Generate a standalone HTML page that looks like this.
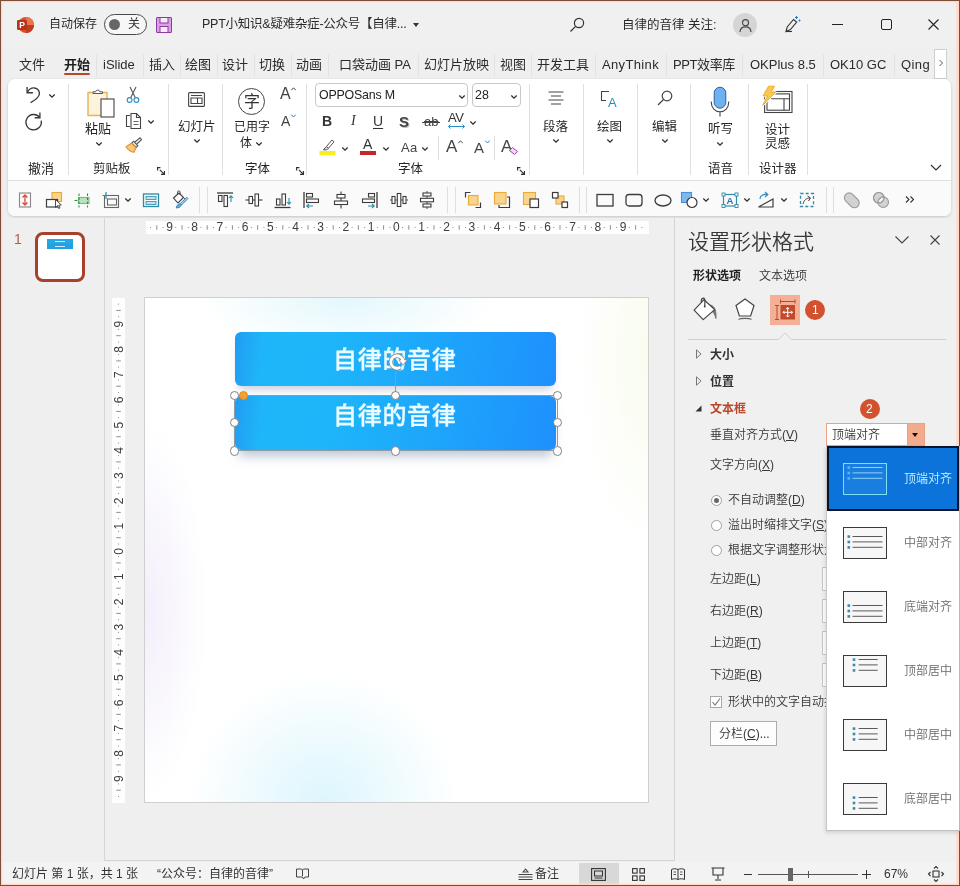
<!DOCTYPE html>
<html lang="zh-CN">
<head>
<meta charset="utf-8">
<title>PowerPoint</title>
<style>
*{box-sizing:border-box;margin:0;padding:0}
html,body{width:960px;height:886px;overflow:hidden;background:#f0f0f0}
body{font-family:"Liberation Sans","Noto Sans CJK SC",sans-serif;color:#262626;font-size:13px}
#app{position:relative;width:960px;height:886px;overflow:hidden;background:#efefef}
.a{position:absolute}
.t{position:absolute;white-space:nowrap;line-height:1;will-change:transform}
svg{position:absolute;overflow:visible;will-change:transform}
.vsep{position:absolute;width:1px;background:#d8d8d8}
.hsep{position:absolute;height:1px;background:#d8d8d8}
.lbl{font-size:13px;color:#262626}
.tab{font-size:13px;color:#2b2b2b}
.pn{font-size:12.5px;color:#383838;font-weight:350}
.dd{font-size:12px;color:#666;font-weight:350}
</style>
</head>
<body>
<div id="app">

<!-- ===== TITLE BAR ===== -->
<div id="titlebar" class="a" style="left:0;top:0;width:960px;height:48px;background:#f0f0f0">
  <!-- ppt logo -->
  <svg style="left:16px;top:16px" width="18" height="18" viewBox="0 0 18 18">
    <circle cx="10" cy="9" r="8" fill="#d9512c"/>
    <path d="M10 1a8 8 0 0 1 8 8h-8z" fill="#e8764f"/>
    <path d="M10 17a8 8 0 0 0 8-8h-8z" fill="#c43c1b"/>
    <rect x="1" y="4" width="10" height="10" rx="1.2" fill="#b5351a"/>
    <text x="6" y="12.2" font-size="8.5" font-weight="700" fill="#fff" text-anchor="middle" font-family="Liberation Sans, sans-serif">P</text>
  </svg>
  <div class="t" style="left:49px;top:18px;font-size:12px;color:#2a2a2a">自动保存</div>
  <div class="a" style="left:104px;top:14px;width:43px;height:21px;border:1px solid #4a4a4a;border-radius:11px;background:#f7f7f7"></div>
  <div class="a" style="left:109px;top:19px;width:11px;height:11px;border-radius:50%;background:#666"></div>
  <div class="t" style="left:128px;top:18px;font-size:12px;color:#333">关</div>
  <!-- save icon -->
  <svg style="left:156px;top:17px" width="16" height="16" viewBox="0 0 16 16">
    <path d="M1 0.5h14a.5.5 0 0 1 .5.5v14a.5.5 0 0 1-.5.5H1a.5.5 0 0 1-.5-.5V1a.5.5 0 0 1 .5-.5z" fill="#d9a0e6" stroke="#8e3aa3" stroke-width="1"/>
    <rect x="4" y="0.5" width="8" height="5.5" fill="#f7ebfa" stroke="#8e3aa3" stroke-width="1"/>
    <rect x="4" y="9.5" width="8" height="6" fill="#f7ebfa" stroke="#8e3aa3" stroke-width="1"/>
  </svg>
  <div class="t" style="left:202px;top:18px;font-size:12.5px;color:#2a2a2a;letter-spacing:-.25px">PPT小知识&amp;疑难杂症-公众号【自律...</div>
  <div class="a" style="left:413px;top:23px;width:0;height:0;border-left:3.5px solid transparent;border-right:3.5px solid transparent;border-top:4px solid #333"></div>
  <!-- search -->
  <svg style="left:569px;top:17px" width="16" height="16" viewBox="0 0 16 16" fill="none" stroke="#333" stroke-width="1.2"><circle cx="10" cy="6" r="4.6"/><path d="M6.6 9.4L1.5 14.5"/></svg>
  <div class="t" style="left:622px;top:18.5px;font-size:12.5px;color:#2a2a2a">自律的音律 关注:</div>
  <!-- avatar -->
  <div class="a" style="left:733px;top:13px;width:24px;height:24px;border-radius:50%;background:#d5d5d5"></div>
  <svg style="left:737.5px;top:17.5px" width="15" height="15" viewBox="0 0 16 16" fill="none" stroke="#444" stroke-width="1.2"><circle cx="8" cy="5" r="3.2"/><path d="M2.2 15c0-3.8 2.5-5.6 5.8-5.6s5.8 1.8 5.8 5.6"/></svg>
  <!-- pen sparkle -->
  <svg style="left:783px;top:14px" width="20" height="20" viewBox="0 0 20 20" fill="none" stroke="#333" stroke-width="1.1"><path d="M3 17.5l1.2-4.5 6.3-7.5 3.2 2.6-6.3 7.5z"/><path d="M3 17.5h6"/><path d="M13.5 2v3M12 3.5h3M16.5 5.5v2M15.5 6.5h2" stroke="#2b7bd6"/></svg>
  <!-- window controls -->
  <div class="a" style="left:832px;top:24px;width:11px;height:1px;background:#222"></div>
  <div class="a" style="left:881px;top:19px;width:11px;height:11px;border:1.2px solid #222;border-radius:2px"></div>
  <svg style="left:928px;top:19px" width="11" height="11" viewBox="0 0 11 11" stroke="#222" stroke-width="1.1"><path d="M0.5 0.5l10 10M10.5 0.5l-10 10"/></svg>
</div>

<!-- ===== TABS ===== -->
<div id="tabs" class="a" style="left:0;top:48px;width:960px;height:32px">
  <div class="t tab" style="left:19px;top:10px;">文件</div>
  <div class="t tab" style="left:64px;top:10px;font-weight:700;color:#1e1e1e;">开始</div>
  <div class="t tab" style="left:103px;top:10px;">iSlide</div>
  <div class="t tab" style="left:149px;top:10px;">插入</div>
  <div class="t tab" style="left:185px;top:10px;">绘图</div>
  <div class="t tab" style="left:222px;top:10px;">设计</div>
  <div class="t tab" style="left:259px;top:10px;">切换</div>
  <div class="t tab" style="left:296px;top:10px;">动画</div>
  <div class="t tab" style="left:339px;top:10px;">口袋动画 PA</div>
  <div class="t tab" style="left:424px;top:10px;">幻灯片放映</div>
  <div class="t tab" style="left:500px;top:10px;">视图</div>
  <div class="t tab" style="left:537px;top:10px;">开发工具</div>
  <div class="t tab" style="left:602px;top:10px;letter-spacing:.35px">AnyThink</div>
  <div class="t tab" style="left:673px;top:10px;letter-spacing:-.4px">PPT效率库</div>
  <div class="t tab" style="left:750px;top:10px;">OKPlus 8.5</div>
  <div class="t tab" style="left:830px;top:10px;">OK10 GC</div>
  <div class="t tab" style="left:901px;top:10px;letter-spacing:.4px">Qing</div>
  <div class="vsep" style="left:96px;top:6px;height:22px;background:#e2e2e2"></div>
  <div class="vsep" style="left:143px;top:6px;height:22px;background:#e2e2e2"></div>
  <div class="vsep" style="left:180px;top:6px;height:22px;background:#e2e2e2"></div>
  <div class="vsep" style="left:217px;top:6px;height:22px;background:#e2e2e2"></div>
  <div class="vsep" style="left:254px;top:6px;height:22px;background:#e2e2e2"></div>
  <div class="vsep" style="left:291px;top:6px;height:22px;background:#e2e2e2"></div>
  <div class="vsep" style="left:328px;top:6px;height:22px;background:#e2e2e2"></div>
  <div class="vsep" style="left:418px;top:6px;height:22px;background:#e2e2e2"></div>
  <div class="vsep" style="left:494px;top:6px;height:22px;background:#e2e2e2"></div>
  <div class="vsep" style="left:531px;top:6px;height:22px;background:#e2e2e2"></div>
  <div class="vsep" style="left:595px;top:6px;height:22px;background:#e2e2e2"></div>
  <div class="vsep" style="left:666px;top:6px;height:22px;background:#e2e2e2"></div>
  <div class="vsep" style="left:742px;top:6px;height:22px;background:#e2e2e2"></div>
  <div class="vsep" style="left:823px;top:6px;height:22px;background:#e2e2e2"></div>
  <div class="vsep" style="left:894px;top:6px;height:22px;background:#e2e2e2"></div>
  <div class="a" style="left:64px;top:25px;width:26px;height:2px;background:#b7472a;border-radius:1px"></div>
  <div class="a" style="left:934px;top:1px;width:13px;height:30px;background:#fff;border:1px solid #cfcfcf"></div>
  <svg style="left:938px;top:11px" width="6" height="8" viewBox="0 0 6 8" fill="none" stroke="#555" stroke-width="1"><path d="M1.5 1l3 3-3 3"/></svg>
</div>

<!-- ===== RIBBON ===== -->
<div id="ribbon" class="a" style="left:8px;top:79px;width:943px;height:137px;background:#fff;border-radius:7px;box-shadow:0 1px 3px rgba(0,0,0,.18)"></div>
<!-- ribbon group 1-4 -->
<svg style="left:23px;top:84px" width="21" height="21" viewBox="0 0 18 18" fill="none" stroke="#3a3a3a" stroke-width="1.15"><path d="M3.5 2.5v5h5"/><path d="M3.8 7.2C5 4.6 7.3 3.2 9.8 3.4c3 .3 4.6 2.8 4.2 5.4-.4 2.6-2.8 4.6-7.5 7.2"/></svg>
<svg style="left:49px;top:93.5px" width="6" height="4" viewBox="0 0 6 4" fill="none" stroke="#2e2e2e" stroke-width="1.25"><path d="M0.3 0.5l2.7 2.7 2.7-2.7"/></svg>
<svg style="left:23px;top:109px" width="21" height="21" viewBox="0 0 18 18" fill="none" stroke="#3a3a3a" stroke-width="1.15"><path d="M14.5 3v4.5H10"/><path d="M14.3 7.2A6.6 6.6 0 1 0 15.6 10"/></svg>
<div class="t lbl" style="left:28px;top:161.5px;font-size:13px;">撤消</div>
<div class="vsep" style="left:68px;top:84px;height:91px;background:#e0e0e0"></div>
<svg style="left:86px;top:87px" width="30" height="32" viewBox="0 0 30 32" fill="none">
<path d="M2 5.5h19v23H2z" fill="#fdf2dc" stroke="#e8b352" stroke-width="1.4"/>
<path d="M7 6.5V4.8h2.6a2.2 2.2 0 0 1 4.3 0h2.6v1.7z" fill="#fff" stroke="#555" stroke-width="1"/>
<rect x="15" y="12" width="13" height="18" fill="#fff" stroke="#444" stroke-width="1.1"/>
</svg>
<div class="t lbl" style="left:85px;top:121.5px;font-size:13px;">粘贴</div>
<svg style="left:96px;top:141.5px" width="6" height="4" viewBox="0 0 6 4" fill="none" stroke="#2e2e2e" stroke-width="1.25"><path d="M0.3 0.5l2.7 2.7 2.7-2.7"/></svg>
<svg style="left:126px;top:86px" width="14" height="18" viewBox="0 0 14 18" fill="none" stroke-width="1.1">
<path d="M4 1l5.2 10.5M10 1L4.8 11.5" stroke="#555"/><circle cx="3.6" cy="14" r="2.4" stroke="#2b8cc4"/><circle cx="10.4" cy="14" r="2.4" stroke="#2b8cc4"/></svg>
<svg style="left:125px;top:112px" width="17" height="18" viewBox="0 0 17 18" fill="none" stroke="#444" stroke-width="1.1">
<path d="M5 3.5H1.5v11H5"/><path d="M6 1.5h5.5l4 4v11H6z" fill="#fff"/><path d="M11.5 1.5v4h4"/><path d="M8.5 9.5h5M8.5 12.5h5" stroke="#666"/></svg>
<svg style="left:148px;top:119.5px" width="6" height="4" viewBox="0 0 6 4" fill="none" stroke="#2e2e2e" stroke-width="1.25"><path d="M0.3 0.5l2.7 2.7 2.7-2.7"/></svg>
<svg style="left:125px;top:136px" width="18" height="18" viewBox="0 0 18 18" fill="none" stroke-width="1.1">
<path d="M10 6l5-4.2 1.5 1.8L11.7 8" stroke="#555" fill="#fff"/><path d="M8.6 5.2l4.2 4.6-1.6 1.6-4.4-4.4z" fill="#fff" stroke="#555"/><path d="M6.6 7L1 10.8c2 3.4 4.3 5 8 5.5L11 11.5z" fill="#f8c77a" stroke="#e0952a"/></svg>
<div class="t lbl" style="left:93px;top:162.8px;font-size:12.5px;">剪贴板</div>
<svg style="left:157.0px;top:167.0px" width="8" height="8" viewBox="0 0 7 7" fill="none" stroke="#333" stroke-width="1.05"><path d="M0.5 0.5h-0v0M0.5 3V0.5H3M2.5 2.5l4 4M6.5 3.5v3h-3"/></svg>
<div class="vsep" style="left:168px;top:84px;height:91px;background:#e0e0e0"></div>
<svg style="left:188px;top:92px" width="17" height="15" viewBox="0 0 17 15" fill="none" stroke="#444" stroke-width="1.1"><rect x="0.6" y="0.6" width="15.8" height="13.8" rx="1"/><path d="M3 3.5h11M3 6h11v5.5H3zM9.5 6v5.5"/></svg>
<div class="t lbl" style="left:178px;top:120.8px;font-size:12.5px;">幻灯片</div>
<svg style="left:194px;top:138.5px" width="6" height="4" viewBox="0 0 6 4" fill="none" stroke="#2e2e2e" stroke-width="1.25"><path d="M0.3 0.5l2.7 2.7 2.7-2.7"/></svg>
<div class="vsep" style="left:222px;top:84px;height:91px;background:#e0e0e0"></div>
<div class="a" style="left:238px;top:88px;width:27px;height:27px;border:1.2px solid #444;border-radius:50%"></div>
<div class="t" style="left:243.5px;top:93.5px;font-size:16px;color:#333">字</div>
<div class="t lbl" style="left:234px;top:121.0px;font-size:12px;">已用字</div>
<div class="t lbl" style="left:240px;top:137.0px;font-size:12px;">体</div>
<svg style="left:256px;top:141.5px" width="6" height="4" viewBox="0 0 6 4" fill="none" stroke="#2e2e2e" stroke-width="1.25"><path d="M0.3 0.5l2.7 2.7 2.7-2.7"/></svg>
<div class="t" style="left:280px;top:86px;font-size:16px;color:#444">A</div><svg style="left:291px;top:87px" width="5" height="4" viewBox="0 0 5 4" fill="none" stroke="#444" stroke-width="1"><path d="M0.3 3.2l2.2-2.4 2.2 2.4"/></svg>
<div class="t" style="left:281px;top:114px;font-size:14px;color:#444">A</div><svg style="left:291px;top:114px" width="5" height="4" viewBox="0 0 5 4" fill="none" stroke="#2b7bd6" stroke-width="1"><path d="M0.3 0.6l2.2 2.4 2.2-2.4"/></svg>
<div class="t lbl" style="left:245px;top:162.8px;font-size:12.5px;">字体</div>
<svg style="left:296.0px;top:167.0px" width="8" height="8" viewBox="0 0 7 7" fill="none" stroke="#333" stroke-width="1.05"><path d="M0.5 0.5h-0v0M0.5 3V0.5H3M2.5 2.5l4 4M6.5 3.5v3h-3"/></svg>
<div class="vsep" style="left:306px;top:84px;height:91px;background:#e0e0e0"></div>
<!-- ribbon font group -->
<div class="a" style="left:315px;top:83px;width:153px;height:24px;border:1px solid #c8c8c8;border-radius:4px;background:#fff"></div>
<div class="t" style="left:318.5px;top:89px;font-size:12.4px;color:#222;letter-spacing:-.2px">OPPOSans M</div>
<svg style="left:459px;top:94.5px" width="6" height="4" viewBox="0 0 6 4" fill="none" stroke="#2e2e2e" stroke-width="1.25"><path d="M0.3 0.5l2.7 2.7 2.7-2.7"/></svg>
<div class="a" style="left:472px;top:83px;width:49px;height:24px;border:1px solid #c8c8c8;border-radius:4px;background:#fff"></div>
<div class="t" style="left:474.5px;top:89px;font-size:12.4px;color:#222">28</div>
<svg style="left:511px;top:94.5px" width="6" height="4" viewBox="0 0 6 4" fill="none" stroke="#2e2e2e" stroke-width="1.25"><path d="M0.3 0.5l2.7 2.7 2.7-2.7"/></svg>
<div class="t" style="left:322px;top:114px;font-size:14px;font-weight:700;color:#333">B</div>
<div class="t" style="left:351px;top:114px;font-size:14px;font-style:italic;color:#333;font-family:'Liberation Serif',serif">I</div>
<div class="t" style="left:373px;top:114px;font-size:14px;color:#333;text-decoration:underline;text-underline-offset:2px">U</div>
<div class="t" style="left:399px;top:114px;font-size:15px;font-weight:700;color:#444;text-shadow:1px 1px 0 #bbb">S</div>
<div class="t" style="left:424px;top:115px;font-size:13px;color:#444;text-decoration:line-through">ab</div><div class="a" style="left:422px;top:122px;width:18px;height:1px;background:#444"></div>
<div class="t" style="left:448px;top:111px;font-size:13px;color:#333;letter-spacing:-.5px">AV</div>
<svg style="left:448px;top:124px" width="17" height="5" viewBox="0 0 17 5" fill="none" stroke="#2b8cc4" stroke-width="1"><path d="M0.5 2.5h16M2.5 0.5l-2 2 2 2M14.5 0.5l2 2-2 2"/></svg>
<svg style="left:470px;top:120.5px" width="6" height="4" viewBox="0 0 6 4" fill="none" stroke="#2e2e2e" stroke-width="1.25"><path d="M0.3 0.5l2.7 2.7 2.7-2.7"/></svg>
<svg style="left:319px;top:138px" width="17" height="18" viewBox="0 0 17 18" fill="none">
<path d="M7.5 8.5L13 2l2 1.8-5.6 6.5z" stroke="#555" stroke-width="1" fill="#fff"/><path d="M7.5 8.500l1.900 1.800-1.500 1.500H4.300z" stroke="#555" stroke-width="1" fill="#ddd"/>
<rect x="0.500" y="13" width="16" height="4.200" fill="#f7f01d"/></svg>
<svg style="left:342px;top:146.5px" width="6" height="4" viewBox="0 0 6 4" fill="none" stroke="#2e2e2e" stroke-width="1.25"><path d="M0.3 0.5l2.7 2.7 2.7-2.7"/></svg>
<div class="t" style="left:362.5px;top:137px;font-size:14px;color:#333">A</div><div class="a" style="left:360px;top:151px;width:16px;height:4px;background:#c8242b"></div>
<svg style="left:383px;top:146.5px" width="6" height="4" viewBox="0 0 6 4" fill="none" stroke="#2e2e2e" stroke-width="1.25"><path d="M0.3 0.5l2.7 2.7 2.7-2.7"/></svg>
<div class="t" style="left:401px;top:140.5px;font-size:13px;color:#444;letter-spacing:.3px">Aa</div>
<svg style="left:422px;top:146.5px" width="6" height="4" viewBox="0 0 6 4" fill="none" stroke="#2e2e2e" stroke-width="1.25"><path d="M0.3 0.5l2.7 2.7 2.7-2.7"/></svg>
<div class="vsep" style="left:438px;top:136px;height:24px;background:#e0e0e0"></div>
<div class="t" style="left:446px;top:138px;font-size:17px;color:#444">A</div><svg style="left:458px;top:140px" width="5" height="4" viewBox="0 0 5 4" fill="none" stroke="#444" stroke-width="1"><path d="M0.3 3.2l2.200-2.400 2.200 2.400"/></svg>
<div class="t" style="left:474px;top:140px;font-size:15px;color:#444">A</div><svg style="left:484.500px;top:140px" width="5" height="4" viewBox="0 0 5 4" fill="none" stroke="#2b7bd6" stroke-width="1"><path d="M0.3 0.6l2.200 2.400 2.200-2.400"/></svg>
<div class="vsep" style="left:494px;top:136px;height:24px;background:#e0e0e0"></div>
<div class="t" style="left:501px;top:138px;font-size:17px;color:#444">A</div><svg style="left:509px;top:147px" width="9" height="8" viewBox="0 0 9 8" fill="none"><path d="M3.5 0.500L8.500 4.500 5.500 7.500 0.500 3.500z" fill="#f4d6f7" stroke="#a13fb3" stroke-width="1"/></svg>
<div class="t lbl" style="left:398px;top:162.8px;font-size:12.5px;">字体</div>
<svg style="left:517.0px;top:167.0px" width="8" height="8" viewBox="0 0 7 7" fill="none" stroke="#333" stroke-width="1.05"><path d="M0.5 3V0.5H3M2.5 2.5l4 4M6.5 3.5v3h-3"/></svg>
<div class="vsep" style="left:529px;top:84px;height:91px;background:#e0e0e0"></div>
<svg style="left:548px;top:91px" width="16" height="14" viewBox="0 0 16 14" fill="none" stroke="#444" stroke-width="1.1"><path d="M0.5 1h15M3 5h10M0.5 9h15M3 13h10"/></svg>
<div class="t lbl" style="left:543px;top:120.8px;font-size:12.5px;">段落</div>
<svg style="left:553px;top:138.5px" width="6" height="4" viewBox="0 0 6 4" fill="none" stroke="#2e2e2e" stroke-width="1.25"><path d="M0.3 0.5l2.7 2.7 2.7-2.7"/></svg>
<div class="vsep" style="left:583px;top:84px;height:91px;background:#e0e0e0"></div>
<svg style="left:600px;top:90px" width="20" height="18" viewBox="0 0 20 18" fill="none"><path d="M9 1.500H1.500v9H6" stroke="#444" stroke-width="1.100"/><circle cx="9.500" cy="2" r="0" /><text x="8" y="17" font-size="13" fill="#2b8cc4" font-family="Liberation Sans, sans-serif">A</text></svg>
<div class="t lbl" style="left:597px;top:120.8px;font-size:12.5px;">绘图</div>
<svg style="left:607px;top:138.5px" width="6" height="4" viewBox="0 0 6 4" fill="none" stroke="#2e2e2e" stroke-width="1.25"><path d="M0.3 0.5l2.7 2.7 2.7-2.7"/></svg>
<div class="vsep" style="left:637px;top:84px;height:91px;background:#e0e0e0"></div>
<svg style="left:657px;top:90px" width="16" height="16" viewBox="0 0 16 16" fill="none" stroke="#444" stroke-width="1.200"><circle cx="10" cy="6" r="4.800"/><path d="M6.500 9.500L1 15"/></svg>
<div class="t lbl" style="left:652px;top:120.8px;font-size:12.5px;">编辑</div>
<svg style="left:662px;top:138.5px" width="6" height="4" viewBox="0 0 6 4" fill="none" stroke="#2e2e2e" stroke-width="1.25"><path d="M0.3 0.5l2.7 2.7 2.7-2.7"/></svg>
<div class="vsep" style="left:690px;top:84px;height:91px;background:#e0e0e0"></div>
<svg style="left:710px;top:86px" width="20" height="32" viewBox="0 0 20 32" fill="none"><rect x="4.200" y="1.200" width="11.600" height="21" rx="5.800" fill="#6db2ee" stroke="#2c63a6" stroke-width="1"/><path d="M1.200 15.500c0 6.500 4 10.300 8.800 10.300s8.800-3.800 8.800-10.300" stroke="#444" stroke-width="1.100"/><path d="M10 25.800V30.500" stroke="#444" stroke-width="1.100"/></svg>
<div class="t lbl" style="left:708px;top:122.8px;font-size:12.5px;">听写</div>
<svg style="left:717px;top:141.5px" width="6" height="4" viewBox="0 0 6 4" fill="none" stroke="#2e2e2e" stroke-width="1.25"><path d="M0.3 0.5l2.7 2.7 2.7-2.7"/></svg>
<div class="t lbl" style="left:708px;top:162.8px;font-size:12.5px;">语音</div>
<div class="vsep" style="left:748px;top:84px;height:91px;background:#e0e0e0"></div>
<svg style="left:760px;top:85px" width="33" height="29" viewBox="0 0 33 29" fill="none"><rect x="4.600" y="6.500" width="27.400" height="21" stroke="#444" stroke-width="1.100" fill="#fff"/><rect x="7" y="8.900" width="22.500" height="16.300" stroke="#444" stroke-width="1.100"/><path d="M11 13.800h18.500M24 13.800v11.400" stroke="#444" stroke-width="1.100"/><path d="M8.500 1.200h6l-3.300 6.300h4.300L2.500 20.500l5-9.500H3z" fill="#fac84e" stroke="#fff" stroke-width="2.400" stroke-linejoin="round"/><path d="M8.500 1.200h6l-3.300 6.300h4.300L2.500 20.500l5-9.500H3z" fill="#fac84e" stroke="#e9a325" stroke-width=".8" stroke-linejoin="round"/></svg>
<div class="t lbl" style="left:765px;top:123.6px;font-size:12.5px;">设计</div>
<div class="t lbl" style="left:765px;top:137.9px;font-size:12.5px;">灵感</div>
<div class="t lbl" style="left:759px;top:162.8px;font-size:12.5px;">设计器</div>
<div class="vsep" style="left:807px;top:84px;height:91px;background:#e0e0e0"></div>
<svg style="left:930px;top:164px" width="12" height="7" viewBox="0 0 12 7" fill="none" stroke="#333" stroke-width="1.200"><path d="M1 1l5 5 5-5"/></svg>
<div class="a" style="left:8px;top:181px;width:943px;height:35px;background:#fafafa;border-radius:0 0 7px 7px"></div>
<div class="hsep" style="left:8px;top:180px;width:943px;background:#dfdfdf"></div>

<!-- QAT row -->
<svg style="left:16.0px;top:190.5px" width="18" height="18" viewBox="0 0 18 18" fill="none" stroke-width="1.1"><rect x="3.500" y="2" width="11" height="14" stroke="#888"/><path d="M9 4v10M6.500 6.500L9 4l2.500 2.500M6.500 11.500L9 14l2.500-2.500" stroke="#e0483e" stroke-width="1.300"/></svg>
<svg style="left:45.0px;top:190.5px" width="18" height="18" viewBox="0 0 18 18" fill="none" stroke-width="1.1"><rect x="7" y="1.500" width="9.500" height="9" fill="#f9d48a" stroke="#e9a93b"/><rect x="1.500" y="8.500" width="11" height="7.500" fill="#fff" stroke="#3c3c3c" stroke-width="1.200"/><path d="M10.500 8.500l0 8 2-1.800 1.300 2.800 1.200-.6-1.300-2.700 2.600-.2z" fill="#fff" stroke="#3c3c3c" stroke-width=".900"/></svg>
<svg style="left:74.0px;top:190.5px" width="18" height="18" viewBox="0 0 18 18" fill="none" stroke-width="1.1"><rect x="4.500" y="6.500" width="10.500" height="6" fill="#b9e3c0" stroke="#6fbf7d"/><path d="M5 2.500v14M13.500 2.500v14" stroke="#3b8a4a" stroke-dasharray="2.500 1.500"/><path d="M0.500 9.500h3" stroke="#3b8a4a"/></svg>
<svg style="left:102.0px;top:190.5px" width="18" height="18" viewBox="0 0 18 18" fill="none" stroke-width="1.1"><rect x="2.500" y="4.500" width="14" height="12" stroke="#666"/><rect x="5.500" y="8" width="9" height="6" stroke="#666"/><path d="M4 1v7M0.500 4.500h7" stroke="#2f8aa8" stroke-width="1.200"/></svg>
<svg style="left:125px;top:197.5px" width="6" height="4" viewBox="0 0 6 4" fill="none" stroke="#2e2e2e" stroke-width="1.25"><path d="M0.3 0.5l2.7 2.7 2.7-2.7"/></svg>
<svg style="left:142.0px;top:190.5px" width="18" height="18" viewBox="0 0 18 18" fill="none" stroke-width="1.1"><rect x="1.500" y="3" width="15" height="12.500" stroke="#2f8aa8" stroke-width="1.300"/><rect x="4" y="5.500" width="10" height="3" fill="#bfe3ec" stroke="#2f8aa8" stroke-width=".800"/><rect x="4" y="10.500" width="10" height="3" fill="#bfe3ec" stroke="#2f8aa8" stroke-width=".800"/></svg>
<svg style="left:171.0px;top:190.5px" width="18" height="18" viewBox="0 0 18 18" fill="none" stroke-width="1.1"><path d="M2.500 7l5.500-5 4.500 4.500-5.500 5.500z" fill="#fff" stroke="#3c3c3c"/><path d="M6.500 3.500V1.200a1.300 1.300 0 0 1 2.600 0V4" stroke="#3c3c3c" stroke-width=".9"/><path d="M12.500 6.500c1.300.8 1.800 2 1.500 4" stroke="#3c3c3c" stroke-width=".9"/><path d="M17 7.500l-6.500 6.500-1.300-1.300 6.500-6.500z" fill="#9fd0ea" stroke="#2f82b8" stroke-width=".9"/><path d="M10.500 14l-1.300-1.300-3 1.500-1 2.800 3.300-.6z" fill="#5fb0dd" stroke="#2f82b8" stroke-width=".9"/></svg>
<div class="vsep" style="left:199px;top:187px;height:26px;background:#dedede"></div>
<div class="vsep" style="left:207px;top:187px;height:26px;background:#dedede"></div>
<svg style="left:216.0px;top:190.5px" width="18" height="18" viewBox="0 0 18 18" fill="none" stroke-width="1.1"><path d="M1 2h16" stroke="#3c3c3c" stroke-width="1.300"/><rect x="2.500" y="4.500" width="3.500" height="6" stroke="#3c3c3c"/><rect x="8" y="4.500" width="3.500" height="11" stroke="#3c3c3c"/><path d="M15 11V5M13 7l2-2.200 2 2.200" stroke="#2f8aa8"/></svg>
<svg style="left:245.0px;top:190.5px" width="18" height="18" viewBox="0 0 18 18" fill="none" stroke-width="1.1"><path d="M0.500 9h17" stroke="#3c3c3c"/><rect x="4" y="5.500" width="3.500" height="7" fill="#fff" stroke="#3c3c3c"/><rect x="10" y="3" width="3.500" height="12" fill="#fff" stroke="#3c3c3c"/></svg>
<svg style="left:274.0px;top:190.5px" width="18" height="18" viewBox="0 0 18 18" fill="none" stroke-width="1.1"><path d="M0.500 16.500h16" stroke="#3c3c3c" stroke-width="1.300"/><rect x="2.500" y="8" width="3.500" height="6" stroke="#3c3c3c"/><rect x="8" y="3" width="3.500" height="11" stroke="#3c3c3c"/><path d="M15 7v6M13 11l2 2.200 2-2.200" stroke="#2f8aa8"/></svg>
<svg style="left:302.0px;top:190.5px" width="18" height="18" viewBox="0 0 18 18" fill="none" stroke-width="1.1"><path d="M2 1v16" stroke="#3c3c3c" stroke-width="1.300"/><rect x="4.500" y="2.500" width="6" height="3.500" stroke="#3c3c3c"/><rect x="4.500" y="8" width="12" height="3.500" stroke="#3c3c3c"/><path d="M11 15H5M7 13l-2.200 2 2.200 2" stroke="#2f8aa8"/></svg>
<svg style="left:331.5px;top:190.5px" width="18" height="18" viewBox="0 0 18 18" fill="none" stroke-width="1.1"><path d="M9 0.500v17" stroke="#3c3c3c"/><rect x="5" y="3.500" width="8" height="3.500" fill="#fff" stroke="#3c3c3c"/><rect x="2.500" y="10" width="13" height="3.500" fill="#fff" stroke="#3c3c3c"/></svg>
<svg style="left:361.0px;top:190.5px" width="18" height="18" viewBox="0 0 18 18" fill="none" stroke-width="1.1"><path d="M16 1v16" stroke="#3c3c3c" stroke-width="1.300"/><rect x="7.500" y="2.500" width="6" height="3.500" stroke="#3c3c3c"/><rect x="1.500" y="8" width="12" height="3.500" stroke="#3c3c3c"/><path d="M7 15h6M11 13l2.200 2-2.200 2" stroke="#2f8aa8"/></svg>
<svg style="left:390.0px;top:190.5px" width="18" height="18" viewBox="0 0 18 18" fill="none" stroke-width="1.1"><path d="M0 9h18" stroke="#3c3c3c" stroke-width=".9"/><rect x="2" y="5.500" width="3" height="7" fill="#fff" stroke="#3c3c3c"/><rect x="7.300" y="2.500" width="3.500" height="13" fill="#fff" stroke="#3c3c3c"/><rect x="13" y="5.500" width="3" height="7" fill="#fff" stroke="#3c3c3c"/></svg>
<svg style="left:418.0px;top:190.5px" width="18" height="18" viewBox="0 0 18 18" fill="none" stroke-width="1.1"><path d="M9 0v18" stroke="#3c3c3c" stroke-width=".9"/><rect x="5" y="2" width="8" height="3" fill="#fff" stroke="#3c3c3c"/><rect x="2.500" y="7.300" width="13" height="3.500" fill="#fff" stroke="#3c3c3c"/><rect x="5" y="13" width="8" height="3" fill="#fff" stroke="#3c3c3c"/></svg>
<div class="vsep" style="left:447px;top:187px;height:26px;background:#dedede"></div>
<div class="vsep" style="left:455px;top:187px;height:26px;background:#dedede"></div>
<svg style="left:463.5px;top:190.5px" width="18" height="18" viewBox="0 0 18 18" fill="none" stroke-width="1.1"><rect x="4.500" y="4.500" width="9.500" height="9.500" fill="#f9d48a" stroke="#e9a93b"/><path d="M6.500 1.500H1.500V6.500M11.500 16.500h5V11.500" stroke="#3c3c3c" stroke-width="1.200"/></svg>
<svg style="left:493.0px;top:190.5px" width="18" height="18" viewBox="0 0 18 18" fill="none" stroke-width="1.1"><path d="M14 6h2.500v10.500H6V14" stroke="#3c3c3c" stroke-width="1.200"/><rect x="1.500" y="1.500" width="11.500" height="11.500" fill="#f9d48a" stroke="#e9a93b"/></svg>
<svg style="left:522.0px;top:190.5px" width="18" height="18" viewBox="0 0 18 18" fill="none" stroke-width="1.1"><rect x="1.500" y="1.500" width="12" height="12" fill="#f9d48a" stroke="#e9a93b"/><rect x="8" y="8" width="8.500" height="8.500" fill="#fff" stroke="#3c3c3c" stroke-width="1.200"/></svg>
<svg style="left:551.0px;top:190.5px" width="18" height="18" viewBox="0 0 18 18" fill="none" stroke-width="1.1"><rect x="5" y="5" width="8" height="8" fill="#f9d48a" stroke="#e9a93b"/><rect x="1.500" y="1.500" width="5.500" height="5.500" fill="#fff" stroke="#3c3c3c" stroke-width="1.200"/><rect x="11" y="11" width="5.500" height="5.500" fill="#fff" stroke="#3c3c3c" stroke-width="1.200"/></svg>
<div class="vsep" style="left:579px;top:187px;height:26px;background:#dedede"></div>
<div class="vsep" style="left:586px;top:187px;height:26px;background:#dedede"></div>
<svg style="left:596.0px;top:190.5px" width="18" height="18" viewBox="0 0 18 18" fill="none" stroke-width="1.1"><rect x="1" y="3.500" width="16" height="11.500" stroke="#3c3c3c" stroke-width="1.300"/></svg>
<svg style="left:625.0px;top:190.5px" width="18" height="18" viewBox="0 0 18 18" fill="none" stroke-width="1.1"><rect x="1" y="3.500" width="16" height="11.500" rx="3" stroke="#3c3c3c" stroke-width="1.300"/></svg>
<svg style="left:654.0px;top:190.5px" width="18" height="18" viewBox="0 0 18 18" fill="none" stroke-width="1.1"><ellipse cx="9" cy="9.500" rx="8" ry="5.500" stroke="#3c3c3c" stroke-width="1.300"/></svg>
<svg style="left:680.0px;top:190.5px" width="18" height="18" viewBox="0 0 18 18" fill="none" stroke-width="1.1"><rect x="1.500" y="1.500" width="10" height="10" fill="#7fb8ea" stroke="#4a90d9"/><circle cx="12" cy="11.500" r="5" fill="#fff" stroke="#3c3c3c" stroke-width="1.200"/></svg>
<svg style="left:703px;top:197.5px" width="6" height="4" viewBox="0 0 6 4" fill="none" stroke="#2e2e2e" stroke-width="1.25"><path d="M0.3 0.5l2.7 2.7 2.7-2.7"/></svg>
<svg style="left:721.0px;top:190.5px" width="18" height="18" viewBox="0 0 18 18" fill="none" stroke-width="1.1"><rect x="2.500" y="3.500" width="13" height="11.500" stroke="#2f8aa8" stroke-width="1.200"/><g fill="#fff" stroke="#2f8aa8" stroke-width=".900"><rect x="1" y="2" width="3" height="3"/><rect x="14" y="2" width="3" height="3"/><rect x="1" y="13.500" width="3" height="3"/><rect x="14" y="13.500" width="3" height="3"/></g><text x="9" y="13" font-size="9.500" font-weight="700" fill="#2b6fb5" stroke="none" text-anchor="middle" font-family="Liberation Sans, sans-serif">A</text></svg>
<svg style="left:744px;top:197.5px" width="6" height="4" viewBox="0 0 6 4" fill="none" stroke="#2e2e2e" stroke-width="1.25"><path d="M0.3 0.5l2.7 2.7 2.7-2.7"/></svg>
<svg style="left:757.0px;top:190.5px" width="18" height="18" viewBox="0 0 18 18" fill="none" stroke-width="1.1"><path d="M1.500 16L16 16 16 8z" stroke="#3c3c3c" stroke-width="1.200"/><path d="M3 8C3 4.500 6 3 10.500 3.500M8 1l2.800 2.500L8 6" stroke="#2f8ac4" stroke-width="1.200"/></svg>
<svg style="left:781px;top:197.5px" width="6" height="4" viewBox="0 0 6 4" fill="none" stroke="#2e2e2e" stroke-width="1.25"><path d="M0.3 0.5l2.7 2.7 2.7-2.7"/></svg>
<svg style="left:798.0px;top:190.5px" width="18" height="18" viewBox="0 0 18 18" fill="none" stroke-width="1.1"><path d="M2.500 2.500h13v13h-13z" stroke="#2f8aa8" stroke-dasharray="3 2.200" stroke-width="1.300"/><path d="M5 13c1-4 3.500-6 7-6M9.500 5l3 2-2 3" stroke="#3c3c3c" stroke-width="1"/></svg>
<div class="vsep" style="left:826px;top:187px;height:26px;background:#dedede"></div>
<div class="vsep" style="left:833px;top:187px;height:26px;background:#dedede"></div>
<svg style="left:843.0px;top:190.5px" width="18" height="18" viewBox="0 0 18 18" fill="none" stroke-width="1.1"><path d="M2.800 3.300a4.800 4.800 0 0 1 6.800 0l5.200 5.200a4.800 4.800 0 0 1-6.800 6.800L2.800 10.100a4.800 4.800 0 0 1 0-6.800z" fill="#d2d2d2" stroke="#9a9a9a"/></svg>
<svg style="left:872.0px;top:190.5px" width="18" height="18" viewBox="0 0 18 18" fill="none" stroke-width="1.1"><circle cx="6.800" cy="6.800" r="5.300" fill="#d4d4d4" stroke="#9a9a9a"/><circle cx="11.200" cy="11.200" r="5.300" fill="#d4d4d4" stroke="#9a9a9a"/><circle cx="6.800" cy="6.800" r="5.300" fill="none" stroke="#9a9a9a"/><ellipse cx="9" cy="9" rx="3.200" ry="1.700" transform="rotate(-45 9 9)" fill="#f4f4f4" stroke="#9a9a9a" stroke-width=".8"/></svg>
<svg style="left:905px;top:196px" width="10" height="7" viewBox="0 0 10 7" fill="none" stroke="#333" stroke-width="1.100"><path d="M1 0.500l3 3-3 3M5.500 0.500l3 3-3 3"/></svg>

<!-- ===== LEFT THUMB PANEL ===== -->
<div id="thumbs" class="a" style="left:0;top:218px;width:104px;height:644px;background:#efefef"></div>
<div class="vsep" style="left:104px;top:218px;height:643px;background:#d6d6d6"></div>

<!-- ===== WORKSPACE ===== -->
<div id="work" class="a" style="left:105px;top:218px;width:570px;height:643px;background:#efefef"></div>
<div class="hsep" style="left:105px;top:860px;width:570px;background:#d4d4d4"></div>

<!-- thumb -->
<div class="t" style="left:14px;top:232px;font-size:14px;color:#b25a45">1</div>
<div class="a" style="left:35px;top:232px;width:50px;height:50px;border:3px solid #a6422c;border-radius:8px;background:#fff"></div>
<div class="a" style="left:46.5px;top:239px;width:26.500px;height:4.700px;background:#25a7e6"></div><div class="a" style="left:46.500px;top:244px;width:26.500px;height:4.700px;background:#239fe2"></div>
<div class="a" style="left:55px;top:240.700px;width:10px;height:1.300px;background:#cfeefb"></div><div class="a" style="left:55px;top:245.700px;width:10px;height:1.300px;background:#cfeefb"></div>
<svg style="left:146px;top:221px" width="503" height="13" viewBox="0 0 503 13">
<rect width="503" height="13" fill="#fefefe"/>
<text x="23.5" y="10.3" font-size="12" fill="#3e3e3e" text-anchor="middle" font-family="Liberation Sans, sans-serif">9</text><text x="48.7" y="10.3" font-size="12" fill="#3e3e3e" text-anchor="middle" font-family="Liberation Sans, sans-serif">8</text><text x="73.9" y="10.3" font-size="12" fill="#3e3e3e" text-anchor="middle" font-family="Liberation Sans, sans-serif">7</text><text x="99.1" y="10.3" font-size="12" fill="#3e3e3e" text-anchor="middle" font-family="Liberation Sans, sans-serif">6</text><text x="124.3" y="10.3" font-size="12" fill="#3e3e3e" text-anchor="middle" font-family="Liberation Sans, sans-serif">5</text><text x="149.5" y="10.3" font-size="12" fill="#3e3e3e" text-anchor="middle" font-family="Liberation Sans, sans-serif">4</text><text x="174.7" y="10.3" font-size="12" fill="#3e3e3e" text-anchor="middle" font-family="Liberation Sans, sans-serif">3</text><text x="199.9" y="10.3" font-size="12" fill="#3e3e3e" text-anchor="middle" font-family="Liberation Sans, sans-serif">2</text><text x="225.1" y="10.3" font-size="12" fill="#3e3e3e" text-anchor="middle" font-family="Liberation Sans, sans-serif">1</text><text x="250.3" y="10.3" font-size="12" fill="#3e3e3e" text-anchor="middle" font-family="Liberation Sans, sans-serif">0</text><text x="275.5" y="10.3" font-size="12" fill="#3e3e3e" text-anchor="middle" font-family="Liberation Sans, sans-serif">1</text><text x="300.7" y="10.3" font-size="12" fill="#3e3e3e" text-anchor="middle" font-family="Liberation Sans, sans-serif">2</text><text x="325.9" y="10.3" font-size="12" fill="#3e3e3e" text-anchor="middle" font-family="Liberation Sans, sans-serif">3</text><text x="351.1" y="10.3" font-size="12" fill="#3e3e3e" text-anchor="middle" font-family="Liberation Sans, sans-serif">4</text><text x="376.3" y="10.3" font-size="12" fill="#3e3e3e" text-anchor="middle" font-family="Liberation Sans, sans-serif">5</text><text x="401.5" y="10.3" font-size="12" fill="#3e3e3e" text-anchor="middle" font-family="Liberation Sans, sans-serif">6</text><text x="426.7" y="10.3" font-size="12" fill="#3e3e3e" text-anchor="middle" font-family="Liberation Sans, sans-serif">7</text><text x="451.9" y="10.3" font-size="12" fill="#3e3e3e" text-anchor="middle" font-family="Liberation Sans, sans-serif">8</text><text x="477.1" y="10.3" font-size="12" fill="#3e3e3e" text-anchor="middle" font-family="Liberation Sans, sans-serif">9</text>
<path d="M29.7 6.00v1M36.0 4.25v4.5M42.3 6.00v1M4.5 6.00v1M10.8 4.25v4.5M17.1 6.00v1M54.9 6.00v1M61.2 4.25v4.5M67.5 6.00v1M80.1 6.00v1M86.4 4.25v4.5M92.7 6.00v1M105.3 6.00v1M111.6 4.25v4.5M117.9 6.00v1M130.5 6.00v1M136.8 4.25v4.5M143.1 6.00v1M155.7 6.00v1M162.0 4.25v4.5M168.3 6.00v1M180.9 6.00v1M187.2 4.25v4.5M193.5 6.00v1M206.1 6.00v1M212.4 4.25v4.5M218.7 6.00v1M231.3 6.00v1M237.6 4.25v4.5M243.9 6.00v1M256.5 6.00v1M262.8 4.25v4.5M269.1 6.00v1M281.7 6.00v1M288.0 4.25v4.5M294.3 6.00v1M306.9 6.00v1M313.2 4.25v4.5M319.5 6.00v1M332.1 6.00v1M338.4 4.25v4.5M344.7 6.00v1M357.3 6.00v1M363.6 4.25v4.5M369.9 6.00v1M382.5 6.00v1M388.8 4.25v4.5M395.1 6.00v1M407.7 6.00v1M414.0 4.25v4.5M420.3 6.00v1M432.9 6.00v1M439.2 4.25v4.5M445.5 6.00v1M458.1 6.00v1M464.4 4.25v4.5M470.7 6.00v1M483.3 6.00v1M489.6 4.25v4.5M495.9 6.00v1" stroke="#8f8f8f" stroke-width="1" fill="none"/>
</svg>
<svg style="left:112px;top:298px" width="13" height="505" viewBox="0 0 13 505">
<rect width="13" height="505" fill="#fefefe"/>
<text transform="translate(10.8 26.1) rotate(-90)" font-size="12" fill="#3e3e3e" text-anchor="middle" font-family="Liberation Sans, sans-serif">9</text><text transform="translate(10.8 51.3) rotate(-90)" font-size="12" fill="#3e3e3e" text-anchor="middle" font-family="Liberation Sans, sans-serif">8</text><text transform="translate(10.8 76.6) rotate(-90)" font-size="12" fill="#3e3e3e" text-anchor="middle" font-family="Liberation Sans, sans-serif">7</text><text transform="translate(10.8 101.8) rotate(-90)" font-size="12" fill="#3e3e3e" text-anchor="middle" font-family="Liberation Sans, sans-serif">6</text><text transform="translate(10.8 127.1) rotate(-90)" font-size="12" fill="#3e3e3e" text-anchor="middle" font-family="Liberation Sans, sans-serif">5</text><text transform="translate(10.8 152.3) rotate(-90)" font-size="12" fill="#3e3e3e" text-anchor="middle" font-family="Liberation Sans, sans-serif">4</text><text transform="translate(10.8 177.6) rotate(-90)" font-size="12" fill="#3e3e3e" text-anchor="middle" font-family="Liberation Sans, sans-serif">3</text><text transform="translate(10.8 202.8) rotate(-90)" font-size="12" fill="#3e3e3e" text-anchor="middle" font-family="Liberation Sans, sans-serif">2</text><text transform="translate(10.8 228.1) rotate(-90)" font-size="12" fill="#3e3e3e" text-anchor="middle" font-family="Liberation Sans, sans-serif">1</text><text transform="translate(10.8 253.3) rotate(-90)" font-size="12" fill="#3e3e3e" text-anchor="middle" font-family="Liberation Sans, sans-serif">0</text><text transform="translate(10.8 278.6) rotate(-90)" font-size="12" fill="#3e3e3e" text-anchor="middle" font-family="Liberation Sans, sans-serif">1</text><text transform="translate(10.8 303.8) rotate(-90)" font-size="12" fill="#3e3e3e" text-anchor="middle" font-family="Liberation Sans, sans-serif">2</text><text transform="translate(10.8 329.1) rotate(-90)" font-size="12" fill="#3e3e3e" text-anchor="middle" font-family="Liberation Sans, sans-serif">3</text><text transform="translate(10.8 354.3) rotate(-90)" font-size="12" fill="#3e3e3e" text-anchor="middle" font-family="Liberation Sans, sans-serif">4</text><text transform="translate(10.8 379.6) rotate(-90)" font-size="12" fill="#3e3e3e" text-anchor="middle" font-family="Liberation Sans, sans-serif">5</text><text transform="translate(10.8 404.8) rotate(-90)" font-size="12" fill="#3e3e3e" text-anchor="middle" font-family="Liberation Sans, sans-serif">6</text><text transform="translate(10.8 430.1) rotate(-90)" font-size="12" fill="#3e3e3e" text-anchor="middle" font-family="Liberation Sans, sans-serif">7</text><text transform="translate(10.8 455.3) rotate(-90)" font-size="12" fill="#3e3e3e" text-anchor="middle" font-family="Liberation Sans, sans-serif">8</text><text transform="translate(10.8 480.6) rotate(-90)" font-size="12" fill="#3e3e3e" text-anchor="middle" font-family="Liberation Sans, sans-serif">9</text>
<path d="M6.00 31.4h1M4.25 37.7h4.5M6.00 44.0h1M6.00 6.1h1M4.25 12.4h4.5M6.00 18.7h1M6.00 56.6h1M4.25 62.9h4.5M6.00 69.2h1M6.00 81.9h1M4.25 88.2h4.5M6.00 94.5h1M6.00 107.1h1M4.25 113.4h4.5M6.00 119.7h1M6.00 132.4h1M4.25 138.7h4.5M6.00 145.0h1M6.00 157.6h1M4.25 163.9h4.5M6.00 170.2h1M6.00 182.9h1M4.25 189.2h4.5M6.00 195.5h1M6.00 208.1h1M4.25 214.4h4.5M6.00 220.7h1M6.00 233.4h1M4.25 239.7h4.5M6.00 246.0h1M6.00 258.6h1M4.25 264.9h4.5M6.00 271.2h1M6.00 283.9h1M4.25 290.2h4.5M6.00 296.5h1M6.00 309.1h1M4.25 315.4h4.5M6.00 321.7h1M6.00 334.4h1M4.25 340.7h4.5M6.00 347.0h1M6.00 359.6h1M4.25 365.9h4.5M6.00 372.2h1M6.00 384.9h1M4.25 391.2h4.5M6.00 397.5h1M6.00 410.1h1M4.25 416.4h4.5M6.00 422.7h1M6.00 435.4h1M4.25 441.7h4.5M6.00 448.0h1M6.00 460.6h1M4.25 466.9h4.5M6.00 473.2h1M6.00 485.9h1M4.25 492.2h4.5M6.00 498.5h1" stroke="#8f8f8f" stroke-width="1" fill="none"/>
</svg>
<div id="slide" class="a" style="left:144px;top:297px;width:505px;height:506px;border:1px solid #cfcfcf;background:
radial-gradient(ellipse 150px 55px at 40% 0%, rgba(218,245,251,.75), rgba(218,245,251,0) 100%),
radial-gradient(ellipse 135px 130px at 35.5% 100%, rgba(212,244,252,.8), rgba(212,244,252,0) 100%),
radial-gradient(ellipse 70px 190px at 100% 12%, rgba(248,252,236,.9), rgba(248,252,236,0) 100%),
radial-gradient(ellipse 62px 190px at 0% 62%, rgba(241,236,251,.85), rgba(241,236,251,0) 100%),
#fff"></div>
<div class="a" style="left:235px;top:332px;width:321px;height:54px;border-radius:6px;background:linear-gradient(96deg,#219cf2 0%,#1fb6f9 9%,#1eb5fa 30%,#1da6fb 62%,#1e90fd 100%);box-shadow:0 7px 10px -4px rgba(120,140,170,.45)"></div>
<div class="t" style="left:333px;top:347.5px;font-size:24px;font-weight:500;color:#e9fbff;letter-spacing:.7px;-webkit-text-stroke:.35px #e9fbff">自律的音律</div>
<div class="a" style="left:235px;top:396px;width:321px;height:54px;border-radius:6px;background:linear-gradient(96deg,#219cf2 0%,#1fb6f9 9%,#1eb5fa 30%,#1da6fb 62%,#1e90fd 100%);box-shadow:0 10px 12px -4px rgba(120,140,170,.5)"></div>
<div class="a" style="left:234px;top:395px;width:324px;height:56px;border:1px solid #8e9aa6"></div>
<div class="t" style="left:333px;top:403.5px;font-size:24px;font-weight:500;color:#e9fbff;letter-spacing:.7px;-webkit-text-stroke:.35px #e9fbff">自律的音律</div>
<div class="a" style="left:395px;top:371px;width:1px;height:21px;background:#8f9aa8"></div>
<svg style="left:386.5px;top:351.5px" width="20" height="20" viewBox="0 0 20 20" fill="none" stroke-linejoin="round"><path d="M13.56 15.08A6.2 6.2 0 1 1 16.1 8.92" stroke="#8b7f80" stroke-width="4.4"/><path d="M12.6 8.2h6.8L16.1 12.6z" fill="#8b7f80" stroke="#8b7f80" stroke-width="1.6"/><path d="M13.56 15.08A6.2 6.2 0 1 1 16.1 8.92" stroke="#fbffff" stroke-width="2.9"/><path d="M12.6 8.200h6.800L16.100 12.600z" fill="#fbffff" stroke="#fbffff" stroke-width=".3"/></svg>
<div class="a" style="left:229.75px;top:390.75px;width:9.5px;height:9.5px;border-radius:50%;background:#fff;border:1.4px solid #808080"></div>
<div class="a" style="left:390.75px;top:390.75px;width:9.5px;height:9.5px;border-radius:50%;background:#fff;border:1.4px solid #808080"></div>
<div class="a" style="left:552.75px;top:390.75px;width:9.5px;height:9.5px;border-radius:50%;background:#fff;border:1.4px solid #808080"></div>
<div class="a" style="left:229.75px;top:417.75px;width:9.5px;height:9.5px;border-radius:50%;background:#fff;border:1.4px solid #808080"></div>
<div class="a" style="left:552.75px;top:417.75px;width:9.5px;height:9.5px;border-radius:50%;background:#fff;border:1.4px solid #808080"></div>
<div class="a" style="left:229.75px;top:446.25px;width:9.5px;height:9.5px;border-radius:50%;background:#fff;border:1.4px solid #808080"></div>
<div class="a" style="left:390.75px;top:446.25px;width:9.5px;height:9.5px;border-radius:50%;background:#fff;border:1.4px solid #808080"></div>
<div class="a" style="left:552.75px;top:446.25px;width:9.5px;height:9.5px;border-radius:50%;background:#fff;border:1.4px solid #808080"></div>
<div class="a" style="left:239px;top:391px;width:9px;height:9px;border-radius:50%;background:#f2a132;border:1px solid #dd8c1e"></div>

<!-- ===== RIGHT PANE ===== -->
<div class="vsep" style="left:674px;top:218px;height:643px;background:#d4d4d4"></div>
<div id="pane" class="a" style="left:675px;top:218px;width:285px;height:644px;background:#f0f0f0"></div>

<!-- pane content -->
<div class="t pn" style="left:688px;top:230.5px;font-size:21px;color:#383838;letter-spacing:0">设置形状格式</div>
<svg style="left:895px;top:236px" width="14" height="8" viewBox="0 0 14 8" fill="none" stroke="#444" stroke-width="1.100"><path d="M0.500 0.500l6.500 6.500 6.500-6.500"/></svg>
<svg style="left:930px;top:235px" width="10" height="10" viewBox="0 0 10 10" fill="none" stroke="#444" stroke-width="1.100"><path d="M0.500 0.500l9 9M9.500 0.500l-9 9"/></svg>
<div class="t pn" style="left:693px;top:270.0px;font-size:12px;font-weight:700;color:#222">形状选项</div>
<div class="t pn" style="left:759px;top:270.0px;font-size:12px;color:#333">文本选项</div>
<svg style="left:693px;top:298px" width="25" height="25" viewBox="0 0 25 25" fill="none" stroke="#444" stroke-width="1.2" stroke-linejoin="round"><path d="M16.500 6.800C20.500 7.500 23.600 10.500 23 20.500 21.800 16.500 21 14.800 19 13.300z" fill="#7a7a7a" stroke="#666" stroke-width=".8"/><path d="M1.100 12.200L11 1.700l10.700 9.900-11.500 10z" fill="#fff"/><path d="M8.300 4.200C8 0.800 9.600-.300 11 .400c1.300.700 1 2.400.900 3.600l-.150 4"/><circle cx="11.750" cy="8.600" r="1" fill="#444" stroke="none"/></svg>
<svg style="left:734px;top:296.5px" width="22" height="25" viewBox="0 0 22 25" fill="none" stroke="#444" stroke-width="1.200"><path d="M11 2l9 6.500-3.400 10.500H5.400L2 8.500z" fill="#fff"/><path d="M4.500 22.500c2-1.500 11-1.500 13 0" stroke="#666"/></svg>
<div class="a" style="left:770px;top:295px;width:30px;height:30px;background:#f4b096"></div>
<svg style="left:772px;top:297px" width="26" height="26" viewBox="0 0 26 26" fill="none"><path d="M8.500 4.500h14.500M8.500 2.500v4M23 2.500v4" stroke="#b8472a" stroke-width="1"/><path d="M5 8.500v14M3 8.500h4M3 22.500h4" stroke="#b8472a" stroke-width="1"/><rect x="8.500" y="8" width="14.500" height="14.500" fill="#c6482a"/><g transform="translate(-.5 -.5)"><path d="M16.200 11v9.500M11.500 15.800h9.500M14.700 12.500l1.500-1.500 1.500 1.500M14.700 19l1.500 1.500 1.500-1.500M13 14.300l-1.500 1.500 1.500 1.500M19.500 14.300l1.500 1.500-1.500 1.500" stroke="#fff" stroke-width="1"/></g></svg>
<div class="a" style="left:805px;top:300px;width:20px;height:20px;border-radius:50%;background:#d2512e"></div><div class="t" style="left:811.500px;top:304px;font-size:12px;color:#fff">1</div>
<svg style="left:688px;top:332px" width="258" height="9" viewBox="0 0 258 9" fill="none" stroke="#cfcfcf" stroke-width="1"><path d="M0 7.500h90.500l6.500-6.500 6.500 6.500H258"/></svg>
<svg style="left:696px;top:349px" width="6" height="10" viewBox="0 0 6 10" fill="none" stroke="#777" stroke-width="1"><path d="M0.500 0.800l4.500 4.200-4.500 4.200z"/></svg>
<div class="t pn" style="left:710px;top:348.5px;font-size:12px;font-weight:700;color:#333">大小</div>
<svg style="left:696px;top:376px" width="6" height="10" viewBox="0 0 6 10" fill="none" stroke="#777" stroke-width="1"><path d="M0.500 0.800l4.500 4.200-4.500 4.200z"/></svg>
<div class="t pn" style="left:710px;top:375.5px;font-size:12px;font-weight:700;color:#333">位置</div>
<svg style="left:695px;top:405px" width="7" height="7" viewBox="0 0 7 7"><path d="M6.500 0.500v6h-6z" fill="#333"/></svg>
<div class="t pn" style="left:710px;top:403.0px;font-size:12px;font-weight:700;color:#b8472a">文本框</div>
<div class="a" style="left:859.500px;top:399px;width:20px;height:20px;border-radius:50%;background:#d2512e"></div><div class="t" style="left:866px;top:403px;font-size:12px;color:#fff">2</div>
<div class="t pn" style="left:710px;top:429.0px;font-size:12px;">垂直对齐方式(<u>V</u>)</div>
<div class="a" style="left:826px;top:423px;width:99px;height:23px;border:1px solid #eaa283;background:#fff"></div><div class="a" style="left:907px;top:424px;width:17px;height:21px;background:#f3ab8e;border-left:1px solid #eaa283"></div>
<div class="a" style="left:912px;top:432.500px;width:0;height:0;border-left:3.500px solid transparent;border-right:3.500px solid transparent;border-top:4px solid #111"></div>
<div class="t pn" style="left:832px;top:428.5px;font-size:12px;color:#333">顶端对齐</div>
<div class="t pn" style="left:710px;top:459.0px;font-size:12px;">文字方向(<u>X</u>)</div>
<div class="a" style="left:711px;top:494.5px;width:11px;height:11px;border-radius:50%;border:1px solid #a0a0a0;background:#fff"></div>
<div class="a" style="left:714px;top:497.5px;width:5px;height:5px;border-radius:50%;background:#666"></div>
<div class="t pn" style="left:728px;top:494.0px;font-size:12px;">不自动调整(<u>D</u>)</div>
<div class="a" style="left:711px;top:519.5px;width:11px;height:11px;border-radius:50%;border:1px solid #a0a0a0;background:#fff"></div>
<div class="t pn" style="left:728px;top:519.0px;font-size:12px;">溢出时缩排文字(<u>S</u>)</div>
<div class="a" style="left:711px;top:544.5px;width:11px;height:11px;border-radius:50%;border:1px solid #a0a0a0;background:#fff"></div>
<div class="t pn" style="left:728px;top:544.0px;font-size:12px;">根据文字调整形状大小(<u>F</u>)</div>
<div class="t pn" style="left:710px;top:573.0px;font-size:12px;">左边距(<u>L</u>)</div>
<div class="a" style="left:822px;top:567px;width:60px;height:24px;border:1px solid #c6c6c6;background:#fff"></div>
<div class="t pn" style="left:710px;top:605.0px;font-size:12px;">右边距(<u>R</u>)</div>
<div class="a" style="left:822px;top:599px;width:60px;height:24px;border:1px solid #c6c6c6;background:#fff"></div>
<div class="t pn" style="left:710px;top:637.0px;font-size:12px;">上边距(<u>T</u>)</div>
<div class="a" style="left:822px;top:631px;width:60px;height:24px;border:1px solid #c6c6c6;background:#fff"></div>
<div class="t pn" style="left:710px;top:669.0px;font-size:12px;">下边距(<u>B</u>)</div>
<div class="a" style="left:822px;top:663px;width:60px;height:24px;border:1px solid #c6c6c6;background:#fff"></div>
<div class="a" style="left:710px;top:696px;width:12px;height:12px;border:1px solid #a8a8a8;background:#fff"></div><svg style="left:712px;top:698px" width="9" height="8" viewBox="0 0 9 8" fill="none" stroke="#777" stroke-width="1.100"><path d="M0.500 4l2.500 3 5-6.500"/></svg>
<div class="t pn" style="left:728px;top:696.0px;font-size:12px;">形状中的文字自动换行(<u>W</u>)</div>
<div class="a" style="left:710px;top:721px;width:67px;height:25px;border:1px solid #adadad;background:#fdfdfd"></div>
<div class="t pn" style="left:719px;top:727.5px;font-size:12px;">分栏(<u>C</u>)...</div>
<!-- dropdown -->
<div class="a" style="left:0;top:0;width:0;height:0;z-index:5">
<div class="a" style="left:826px;top:446px;width:134px;height:385px;background:#fff;border-left:1px solid #c8c8c8;border-bottom:1px solid #c0c0c0;border-right:1px solid #b8b8b8;box-shadow:-1px 2px 4px rgba(0,0,0,.12)"></div>
<div class="a" style="left:827px;top:446px;width:132px;height:65px;background:#0c73db;border:2px solid #07142a"></div>
<svg style="left:843px;top:463px" width="44" height="32" viewBox="0 0 44 32" fill="none"><rect x="0.5" y="0.5" width="43" height="31" fill="#1a7ee0" stroke="#7fe0f5" stroke-width="1"/><rect x="4.5" y="3.3" width="2.6" height="2.6" fill="#58b4ee"/><path d="M9.5 4.5h30" stroke="#8fd3f2" stroke-width="1"/><rect x="4.5" y="8.7" width="2.6" height="2.6" fill="#58b4ee"/><path d="M9.5 9.9h30" stroke="#8fd3f2" stroke-width="1"/><rect x="4.5" y="14.1" width="2.6" height="2.6" fill="#58b4ee"/><path d="M9.5 15.3h30" stroke="#8fd3f2" stroke-width="1"/></svg>
<div class="t dd" style="left:904px;top:473px;color:#c8f4ff">顶端对齐</div>
<svg style="left:843px;top:527px" width="44" height="32" viewBox="0 0 44 32" fill="none"><rect x="0.5" y="0.5" width="43" height="31" fill="#f7f7f7" stroke="#3a3a3a" stroke-width="1"/><rect x="4.5" y="8.3" width="2.6" height="2.6" fill="#3b8aa8"/><path d="M9.5 9.5h30" stroke="#5a5a5a" stroke-width="1"/><rect x="4.5" y="13.7" width="2.6" height="2.6" fill="#3b8aa8"/><path d="M9.5 14.9h30" stroke="#5a5a5a" stroke-width="1"/><rect x="4.5" y="19.1" width="2.6" height="2.6" fill="#3b8aa8"/><path d="M9.5 20.3h30" stroke="#5a5a5a" stroke-width="1"/></svg>
<div class="t dd" style="left:904px;top:537px;color:#6a6a6a">中部对齐</div>
<svg style="left:843px;top:591px" width="44" height="32" viewBox="0 0 44 32" fill="none"><rect x="0.5" y="0.5" width="43" height="31" fill="#f7f7f7" stroke="#3a3a3a" stroke-width="1"/><rect x="4.5" y="13.3" width="2.6" height="2.6" fill="#3b8aa8"/><path d="M9.5 14.5h30" stroke="#5a5a5a" stroke-width="1"/><rect x="4.5" y="18.7" width="2.6" height="2.6" fill="#3b8aa8"/><path d="M9.5 19.9h30" stroke="#5a5a5a" stroke-width="1"/><rect x="4.5" y="24.1" width="2.6" height="2.6" fill="#3b8aa8"/><path d="M9.5 25.3h30" stroke="#5a5a5a" stroke-width="1"/></svg>
<div class="t dd" style="left:904px;top:601px;color:#6a6a6a">底端对齐</div>
<svg style="left:843px;top:655px" width="44" height="32" viewBox="0 0 44 32" fill="none"><rect x="0.5" y="0.5" width="43" height="31" fill="#f7f7f7" stroke="#3a3a3a" stroke-width="1"/><rect x="9.7" y="3.3" width="2.6" height="2.6" fill="#3b8aa8"/><path d="M15.7 4.5h19" stroke="#5a5a5a" stroke-width="1"/><rect x="9.7" y="8.7" width="2.6" height="2.6" fill="#3b8aa8"/><path d="M15.7 9.9h19" stroke="#5a5a5a" stroke-width="1"/><rect x="9.7" y="14.1" width="2.6" height="2.6" fill="#3b8aa8"/><path d="M15.7 15.3h19" stroke="#5a5a5a" stroke-width="1"/></svg>
<div class="t dd" style="left:904px;top:665px;color:#6a6a6a">顶部居中</div>
<svg style="left:843px;top:719px" width="44" height="32" viewBox="0 0 44 32" fill="none"><rect x="0.5" y="0.5" width="43" height="31" fill="#f7f7f7" stroke="#3a3a3a" stroke-width="1"/><rect x="9.7" y="8.3" width="2.6" height="2.6" fill="#3b8aa8"/><path d="M15.7 9.5h19" stroke="#5a5a5a" stroke-width="1"/><rect x="9.7" y="13.7" width="2.6" height="2.6" fill="#3b8aa8"/><path d="M15.7 14.9h19" stroke="#5a5a5a" stroke-width="1"/><rect x="9.7" y="19.1" width="2.6" height="2.6" fill="#3b8aa8"/><path d="M15.7 20.3h19" stroke="#5a5a5a" stroke-width="1"/></svg>
<div class="t dd" style="left:904px;top:729px;color:#6a6a6a">中部居中</div>
<svg style="left:843px;top:783px" width="44" height="32" viewBox="0 0 44 32" fill="none"><rect x="0.5" y="0.5" width="43" height="31" fill="#f7f7f7" stroke="#3a3a3a" stroke-width="1"/><rect x="9.7" y="13.3" width="2.6" height="2.6" fill="#3b8aa8"/><path d="M15.7 14.5h19" stroke="#5a5a5a" stroke-width="1"/><rect x="9.7" y="18.7" width="2.6" height="2.6" fill="#3b8aa8"/><path d="M15.7 19.9h19" stroke="#5a5a5a" stroke-width="1"/><rect x="9.7" y="24.1" width="2.6" height="2.6" fill="#3b8aa8"/><path d="M15.7 25.3h19" stroke="#5a5a5a" stroke-width="1"/></svg>
<div class="t dd" style="left:904px;top:793px;color:#6a6a6a">底部居中</div>
</div>

<!-- ===== STATUS BAR ===== -->
<div id="status" class="a" style="left:0;top:862px;width:960px;height:24px;background:#f3f3f3"></div>

<!-- status content -->
<div class="t" style="left:12px;top:868px;font-size:12px;color:#333">幻灯片 第 1 张，共 1 张</div>
<div class="t" style="left:157px;top:868px;font-size:12px;color:#333">“公众号：自律的音律”</div>
<svg style="left:296px;top:868px" width="13" height="12" viewBox="0 0 13 12" fill="none" stroke="#444" stroke-width="1"><path d="M0.500 1h5l1 1 1-1h5v8h-3.500l-1.500 2-1-2H0.500z"/><path d="M6.500 2v6"/></svg>
<svg style="left:518px;top:868px" width="15" height="12" viewBox="0 0 15 12" fill="none" stroke="#444" stroke-width="1.100"><path d="M0.500 6.500h14M0.500 9h14M0.500 11.500h14M5 4l2.500-3L10 4z"/></svg>
<div class="t" style="left:535px;top:868px;font-size:12px;color:#333">备注</div>
<div class="a" style="left:579px;top:863px;width:40px;height:22px;background:#d8d8d8"></div>
<svg style="left:591px;top:868px" width="15" height="13" viewBox="0 0 15 13" fill="none" stroke="#333" stroke-width="1.100"><rect x="0.600" y="0.600" width="13.800" height="11.800"/><path d="M3.500 3h8v5h-8zM3.500 10h8" /></svg>
<svg style="left:632px;top:868px" width="13" height="13" viewBox="0 0 13 13" fill="none" stroke="#333" stroke-width="1.100"><rect x="0.600" y="0.600" width="4.500" height="4.500"/><rect x="7.900" y="0.600" width="4.500" height="4.500"/><rect x="0.600" y="7.900" width="4.500" height="4.500"/><rect x="7.900" y="7.900" width="4.500" height="4.500"/></svg>
<svg style="left:671px;top:868px" width="14" height="13" viewBox="0 0 14 13" fill="none" stroke="#333" stroke-width="1"><path d="M0.500 1.500c2-1 4.500-1 6.500 0 2-1 4.500-1 6.500 0v10c-2-1-4.500-1-6.500 0-2-1-4.500-1-6.500 0zM7 1.500v10"/><path d="M2.500 4h2.500M2.500 6.500h2.500M9 4h2.500M9 6.500h2.500" stroke-width=".8"/></svg>
<svg style="left:711px;top:867px" width="14" height="14" viewBox="0 0 14 14" fill="none" stroke="#333" stroke-width="1.100"><path d="M0.500 1h13M2 1v7h10V1M7 8v4M4 13h6"/></svg>
<div class="a" style="left:744px;top:874px;width:8px;height:1px;background:#333"></div>
<div class="a" style="left:758px;top:874px;width:100px;height:1px;background:#555"></div>
<div class="a" style="left:808px;top:871px;width:1px;height:7px;background:#555"></div>
<div class="a" style="left:788px;top:868px;width:5px;height:13px;background:#666"></div>
<div class="a" style="left:862px;top:874px;width:9px;height:1px;background:#333"></div><div class="a" style="left:866px;top:870px;width:1px;height:9px;background:#333"></div>
<div class="t" style="left:884px;top:868px;font-size:12px;color:#333">67%</div>
<svg style="left:928px;top:866px" width="16" height="16" viewBox="0 0 16 16" fill="none" stroke="#333" stroke-width="1.100"><rect x="5" y="5" width="6" height="6"/><path d="M6 2.500l2-2 2 2M6 13.500l2 2 2-2M2.500 6l-2 2 2 2M13.500 6l2 2-2 2"/></svg>

<!-- ===== WINDOW BORDER ===== -->
<div class="a" style="left:0;top:0;width:960px;height:886px;border:1px solid #7d4d39;border-right-width:1.5px;border-bottom-width:1.5px;box-shadow:inset 0 0 0 1px #ffd9c8, inset 0 0 3px 1px rgba(255,222,206,.9), inset -3px -1px 0 0 #ffdccb;pointer-events:none"></div>
</div>
</body>
</html>
